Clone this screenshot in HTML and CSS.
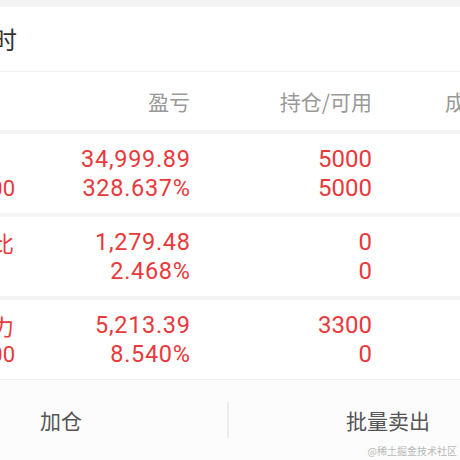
FILE: index.html
```html
<!DOCTYPE html>
<html lang="zh-CN">
<head>
<meta charset="utf-8">
<title>持仓</title>
<link rel="stylesheet" href="styles.css">
</head>
<body>
<div class="screen">
  <div class="top-band"></div>
  <div class="title-row">
    <div class="name-col"><span class="title-text">时</span></div>
  </div>
  <div class="header-row">
    <div class="name-col"></div>
    <div class="pl-col">盈亏</div>
    <div class="pos-col">持仓/可用</div>
    <div class="cost-col">成本/现价</div>
  </div>
  <div class="list">
    <div class="row">
      <div class="name-col">
        <span class="stock-name">&nbsp;</span>
        <span class="stock-code">00</span>
      </div>
      <div class="pl-col">
        <span class="num">34,999.89</span>
        <span class="num">328.637%</span>
      </div>
      <div class="pos-col">
        <span class="qty">5000</span>
        <span class="qty">5000</span>
      </div>
    </div>
    <div class="row">
      <div class="name-col">
        <span class="stock-name">比</span>
        <span class="stock-code">&nbsp;</span>
      </div>
      <div class="pl-col">
        <span class="num">1,279.48</span>
        <span class="num">2.468%</span>
      </div>
      <div class="pos-col">
        <span class="qty">0</span>
        <span class="qty">0</span>
      </div>
    </div>
    <div class="row">
      <div class="name-col">
        <span class="stock-name">力</span>
        <span class="stock-code">00</span>
      </div>
      <div class="pl-col">
        <span class="num">5,213.39</span>
        <span class="num">8.540%</span>
      </div>
      <div class="pos-col">
        <span class="qty">3300</span>
        <span class="qty">0</span>
      </div>
    </div>
  </div>
  <div class="bottom-bar">
    <div class="btn btn-left">加仓</div>
    <div class="divider"></div>
    <div class="btn btn-right">批量卖出</div>
    <div class="watermark">@稀土掘金技术社区</div>
  </div>
</div>
</body>
</html>
```
FILE: styles.css
```css
html, body {
  margin: 0;
  padding: 0;
  background: #ffffff;
}
body {
  width: 460px;
  height: 460px;
  overflow: hidden;
  font-family: "Noto Sans CJK SC", "Noto Sans", sans-serif;
}
.screen {
  width: 460px;
  height: 460px;
  display: flex;
  flex-direction: column;
  position: relative;
  overflow: hidden;
}
.top-band {
  height: 7px;
  background: #f4f4f4;
}
.title-row {
  height: 64px;
  display: flex;
  align-items: center;
  border-bottom: 1px solid #f0f0f0;
}
.title-text {
  font-size: 24px;
  color: #333333;
  line-height: 28px;
}
.name-col {
  width: 17px;
  flex: none;
  display: flex;
  flex-direction: column;
  align-items: flex-end;
  white-space: nowrap;
}
.header-row {
  height: 58px;
  display: flex;
  align-items: center;
  font-size: 21px;
  color: #999999;
  white-space: nowrap;
}
.pl-col {
  width: 173px;
  flex: none;
  display: flex;
  flex-direction: column;
  align-items: flex-end;
}
.pos-col {
  width: 182px;
  flex: none;
  display: flex;
  flex-direction: column;
  align-items: flex-end;
}
.cost-col {
  margin-left: 73px;
  flex: none;
}
.list {
  display: flex;
  flex-direction: column;
  gap: 4px;
  padding-top: 4px;
  background: #f4f4f4;
}
.row {
  height: 79px;
  background: #ffffff;
  display: flex;
  align-items: center;
}
.stock-name {
  font-size: 22px;
  line-height: 29px;
  color: #e8393c;
  padding-right: 3px;
}
.stock-code {
  font-family: Roboto, "Noto Sans", sans-serif;
  font-size: 22px;
  line-height: 29px;
  color: #e8393c;
  padding-right: 2px;
}
.num {
  font-family: Roboto, "Noto Sans", sans-serif;
  font-size: 23.5px;
  letter-spacing: 0.7px;
  margin-right: -0.7px;
  line-height: 29px;
  color: #e8393c;
}
.qty {
  font-family: Roboto, "Noto Sans", sans-serif;
  font-size: 24px;
  line-height: 29px;
  color: #e8393c;
}
.bottom-bar {
  flex: 1;
  display: flex;
  align-items: center;
  background: #fcfcfc;
  border-top: 1px solid #efefef;
  position: relative;
}
.btn {
  font-size: 21px;
  color: #555555;
  line-height: 28px;
}
.btn-left {
  width: 187px;
  padding-left: 40px;
  flex: none;
}
.divider {
  width: 2px;
  height: 36px;
  background: #ececec;
  flex: none;
}
.btn-right {
  flex: 1;
  text-align: right;
  padding-right: 30px;
}
.watermark {
  position: absolute;
  right: 3px;
  bottom: 2px;
  font-size: 10px;
  color: #b8b8b8;
  line-height: 14px;
}
```
